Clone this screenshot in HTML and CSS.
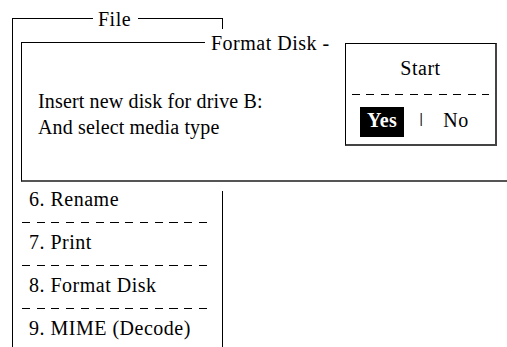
FILE: index.html
```html
<!DOCTYPE html>
<html lang="en">
<head>
    <meta charset="UTF-8">
    <meta name="viewport" content="width=device-width, initial-scale=1.0">
    <title>Format Disk</title>
    <link rel="stylesheet" href="styles.css">
</head>
<body>
    <div class="canvas">
        <section class="window file-window">
            <span class="window-title file-title">File</span>
            <ul class="menu">
                <li>6. Rename</li>
                <li>7. Print</li>
                <li>8. Format Disk</li>
                <li>9. MIME (Decode)</li>
            </ul>
        </section>

        <section class="window format-window">
            <span class="window-title format-title">Format Disk -</span>
            <p class="message">Insert new disk for drive B:<br>And select media type</p>

            <div class="confirm">
                <div class="confirm-title">Start</div>
                <div class="dash-line"></div>
                <div class="confirm-options">
                    <span class="option selected">Yes</span>
                    <span class="divider">|</span>
                    <span class="option">No</span>
                </div>
            </div>
        </section>
    </div>
</body>
</html>
```

FILE: styles.css
```css
body {
    margin: 0;
    background: #fff;
    color: #000;
    font-family: "Liberation Serif", "Times New Roman", serif;
    font-size: 20px;
    letter-spacing: 0.5px;
}

.canvas {
    position: relative;
    width: 507px;
    height: 347px;
    overflow: hidden;
}

/* windows sit on a free canvas and overlap each other */
.window {
    position: absolute;
    background: #fff;
}

.window-title {
    position: absolute;
    background: #fff;
    line-height: 23px;
    white-space: nowrap;
}

.file-window {
    left: 12px;
    top: 18px;
    width: 210px;
    height: 360px;
    border-top: 1px solid #000;
    border-left: 1px solid #000;
    z-index: 1;
}

.file-window::after {
    content: "";
    position: absolute;
    right: 0;
    top: -1px;
    height: 12px;
    border-right: 1px solid #000;
}

.file-title {
    left: 80px;
    top: -11px;
    padding: 0 7px 0 5px;
}

.menu {
    list-style: none;
    margin: 172px 0 0;
    padding: 0;
    height: 200px;
    border-right: 1px solid #000;
}

.menu li {
    padding: 11px 0 0 16px;
    line-height: 17px;
}

.menu li:first-child {
    padding-top: 0;
}

.menu li:not(:last-child)::after {
    content: "";
    display: block;
    height: 1px;
    margin: 14px 15px 0 -7px;
    background: repeating-linear-gradient(90deg, #000 0 8px, transparent 8px 14.75px);
}

.format-window {
    left: 21px;
    top: 42px;
    right: -10px;
    height: 137px;
    border-top: 1px solid #000;
    border-left: 1px solid #000;
    border-bottom: 2px solid #555;
    z-index: 2;
}

.format-title {
    left: 183px;
    right: 0;
    top: -14px;
    padding: 3px 0 0 6px;
}

.message {
    margin: 0;
    padding: 45px 0 0 16px;
    line-height: 26px;
    letter-spacing: 0.15px;
}

.confirm {
    position: absolute;
    left: 323px;
    top: 0;
    width: 149px;
    height: 100px;
    border: 1px solid #000;
    border-right: 2px solid #444;
    border-bottom: 2px solid #444;
    background: #fff;
    text-align: center;
    z-index: 1;
}

.confirm-title {
    padding-top: 13px;
    line-height: 23px;
}

.dash-line {
    height: 1px;
    margin: 14px 6px 0 6px;
    background: repeating-linear-gradient(90deg, #000 0 8px, transparent 8px 14.5px);
}

.confirm-options {
    display: flex;
    align-items: flex-start;
    margin-top: 12px;
    padding-left: 14px;
}

.option {
    line-height: 26px;
}

.option.selected {
    padding: 0 7px 4px 7px;
    background: #000;
    color: #fff;
    font-weight: bold;
}

.divider {
    padding-top: 4px;
    margin: 0 20px 0 15px;
    font-size: 15px;
    font-weight: bold;
    line-height: 15px;
    color: #000;
}
```
